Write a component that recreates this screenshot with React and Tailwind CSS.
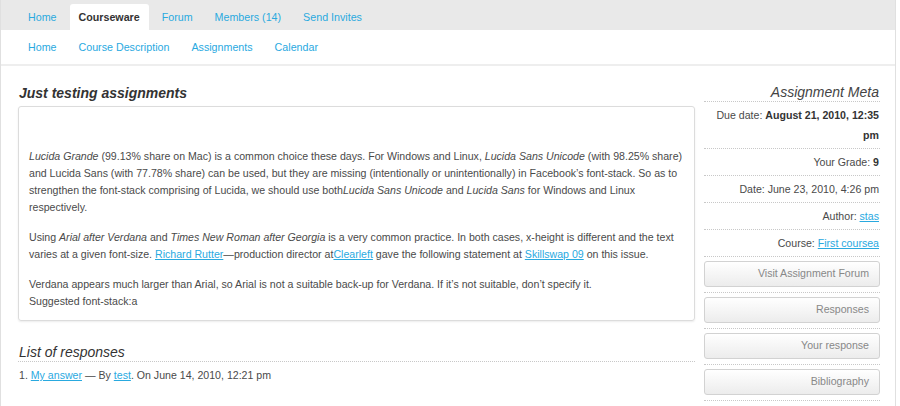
import React from 'react';

const tabs = ['Home', 'Courseware', 'Forum', 'Members (14)', 'Send Invites'];
const subTabs = ['Home', 'Course Description', 'Assignments', 'Calendar'];
const actions = ['Visit Assignment Forum', 'Responses', 'Your response', 'Bibliography'];

const A = ({ children }) => (
  <a href="#" className="text-[#29a9df] underline">{children}</a>
);

const MetaRow = ({ children }) => (
  <div className="border-b border-dotted border-[#c8c8c8] py-[3px] text-right leading-[20px] pr-px">
    {children}
  </div>
);

export default function App() {
  return (
    <div
      className="w-[896px] min-h-[406px] border-x border-[#e0e0e0] bg-white text-[10.6px] text-[#4a4a4a]"
      style={{ fontFamily: '"Liberation Sans", Arial, sans-serif' }}
    >
      {/* top tabs */}
      <div className="h-[30px] bg-[#e9e9e9] flex items-end pl-[18px] gap-[4px] text-[10.7px]">
        {tabs.map((t) => (
          <a
            key={t}
            href="#"
            className={
              t === 'Courseware'
                ? 'h-[26px] px-[9px] flex items-center pt-px bg-white rounded-t-[3px] font-bold text-[#333]'
                : 'h-[26px] px-[9px] flex items-center pt-px text-[#29a9df]'
            }
          >
            {t}
          </a>
        ))}
      </div>

      {/* sub nav */}
      <div className="h-[36px] border-b-2 border-[#eeeeee] flex items-center pl-[18px] gap-[4px] text-[10.7px]">
        {subTabs.map((t) => (
          <a key={t} href="#" className="px-[9px] pt-px text-[#29a9df]">
            {t}
          </a>
        ))}
      </div>

      <div className="flex gap-[9px] pl-[17px] pr-[15px] pt-[17px]">
        {/* main column */}
        <div className="w-[677px] shrink-0">
          <h1 className="text-[14px] leading-[18px] font-bold italic text-[#333] pl-px pt-px">
            Just testing assignments
          </h1>
          <div className="mt-[4px] border border-[#dcdcdc] rounded-[3px] shadow-[0_1px_2px_rgba(0,0,0,0.08)] pt-[41px] pb-[10px] pl-[10px] pr-[5px] leading-[17px]">
            <p className="mb-[13px]">
              <em>Lucida Grande</em> (99.13% share on Mac) is a common choice these days. For Windows and Linux,{' '}
              <em>Lucida Sans Unicode</em> (with 98.25% share) and Lucida Sans (with 77.78% share) can be used, but
              they are missing (intentionally or unintentionally) in Facebook’s font-stack. So as to strengthen the
              font-stack comprising of Lucida, we should use both<em>Lucida Sans Unicode</em> and <em>Lucida Sans</em>{' '}
              for Windows and Linux respectively.
            </p>
            <p className="mb-[13px]">
              Using <em>Arial after Verdana</em> and <em>Times New Roman after Georgia</em> is a very common practice.
              In both cases, x-height is different and the text varies at a given font-size. <A>Richard Rutter</A>
              —production director at<A>Clearleft</A> gave the following statement at <A>Skillswap 09</A> on this
              issue.
            </p>
            <p>
              Verdana appears much larger than Arial, so Arial is not a suitable back-up for Verdana. If it’s not
              suitable, don’t specify it.
              <br />
              Suggested font-stack:a
            </p>
          </div>

          <h2 className="mt-[22px] text-[14px] leading-[18px] italic text-[#333] border-b border-dotted border-[#c8c8c8] pl-px">
            List of responses
          </h2>
          <ol className="mt-[5px] pl-px leading-[17px]">
            <li>
              1. <A>My answer</A> — By <A>test</A>. On June 14, 2010, 12:21 pm
            </li>
          </ol>
        </div>

        {/* sidebar */}
        <div className="w-[176px] shrink-0">
          <h3 className="text-[14px] leading-[18px] italic text-[#444] text-right border-b border-dotted border-[#c8c8c8] pr-px">
            Assignment Meta
          </h3>
          <MetaRow>
            Due date: <strong className="text-[#333]">August 21, 2010, 12:35 pm</strong>
          </MetaRow>
          <MetaRow>
            Your Grade: <strong className="text-[#333]">9</strong>
          </MetaRow>
          <MetaRow>Date: June 23, 2010, 4:26 pm</MetaRow>
          <MetaRow>
            Author: <A>stas</A>
          </MetaRow>
          <MetaRow>
            Course: <A>First coursea</A>
          </MetaRow>
          {actions.map((a) => (
            <div key={a} className="border-b border-dotted border-[#c8c8c8] pt-[4px] pb-[5px]">
              <button className="w-full h-[26px] border border-[#d2d2d2] rounded-[3px] bg-gradient-to-b from-white to-[#ececec] text-right pr-[10px] text-[#888] text-[10.6px]">
                {a}
              </button>
            </div>
          ))}
        </div>
      </div>
    </div>
  );
}
